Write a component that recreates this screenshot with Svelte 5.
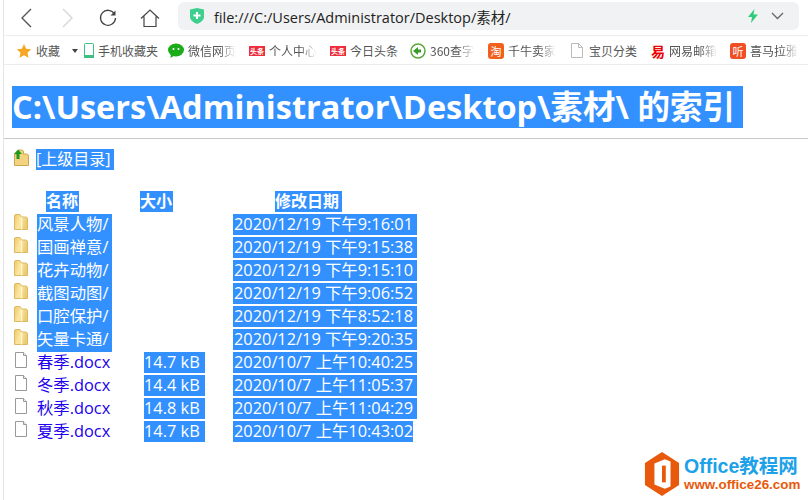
<script>
    const bookmarks = [
        { label: '手机收藏夹', icon: 'phone', w: 84 },
        { label: '微信网页', icon: 'wechat', w: 81, fade: true },
        { label: '个人中心', icon: 'toutiao', w: 81, fade: true },
        { label: '今日头条', icon: 'toutiao', w: 80 },
        { label: '360查字', icon: '360', w: 78, fade: true },
        { label: '千牛卖家', icon: 'tao', w: 83, fade: true },
        { label: '宝贝分类', icon: 'doc', w: 80 },
        { label: '网易邮箱', icon: 'netease', w: 79, fade: true },
        { label: '喜马拉雅', icon: 'ting', w: 70, fade: true }
    ];
    const rows = [
        { name: '风景人物/', size: '', date: '2020/12/19 下午9:16:01', dir: true },
        { name: '国画禅意/', size: '', date: '2020/12/19 下午9:15:38', dir: true },
        { name: '花卉动物/', size: '', date: '2020/12/19 下午9:15:10', dir: true },
        { name: '截图动图/', size: '', date: '2020/12/19 下午9:06:52', dir: true },
        { name: '口腔保护/', size: '', date: '2020/12/19 下午8:52:18', dir: true },
        { name: '矢量卡通/', size: '', date: '2020/12/19 下午9:20:35', dir: true },
        { name: '春季.docx', size: '14.7 kB', date: '2020/10/7 上午10:40:25' },
        { name: '冬季.docx', size: '14.4 kB', date: '2020/10/7 上午11:05:37' },
        { name: '秋季.docx', size: '14.8 kB', date: '2020/10/7 上午11:04:29' },
        { name: '夏季.docx', size: '14.7 kB', date: '2020/10/7 上午10:43:02' }
    ];
</script>

{#snippet folder()}
    <svg class="file-icon" width="14" height="16" viewBox="0 0 14 16">
        <defs>
            <linearGradient id="fold" x1="0" y1="0" x2="1" y2="0.300">
                <stop offset="0" stop-color="#f0c860"/>
                <stop offset="0.500" stop-color="#fbe7a4"/>
                <stop offset="1" stop-color="#eccb72"/>
            </linearGradient>
        </defs>
        <path d="M.5 15.500V2Q.5.500 2 .5h3Q7 .5 7 2.500V3h4.500q2 0 2 2v10.500z" fill="url(#fold)" stroke="#dcb95f"/>
        <path d="M7.500 3.500v12" stroke="#fff6d0" stroke-width="1.500"/>
    </svg>
{/snippet}

<div class="chrome">
    <div class="toolbar">
        <svg class="nav" width="18" height="20" viewBox="0 0 18 20"><path d="M13 1 4 10l9 9" fill="none" stroke="#555" stroke-width="1.400"/></svg>
        <svg class="nav" width="18" height="20" viewBox="0 0 18 20"><path d="m5 1 9 9-9 9" fill="none" stroke="#d6d6d6" stroke-width="1.400"/></svg>
        <svg class="nav" width="20" height="20" viewBox="0 0 20 20"><path d="M16.500 6A7.500 7.500 0 1 0 17.500 10" fill="none" stroke="#444" stroke-width="1.300"/><path d="M17.500 2.500v5h-5z" fill="#444"/></svg>
        <svg class="nav" width="20" height="20" viewBox="0 0 20 20"><path d="M1 10.500 10 2l9 8.500M4 8.500V18.500h12V8.500" fill="none" stroke="#444" stroke-width="1.200"/></svg>
        <div class="address">
            <svg width="14" height="16" viewBox="0 0 14 16"><path d="M0 1.500 7 0l7 1.500V9q0 4-7 7-7-3-7-7z" fill="#3ecf8e"/><path d="M7 4v7M3.500 7.500h7" stroke="#fff" stroke-width="2"/></svg>
            <span class="url">file:///C:/Users/Administrator/Desktop/素材/</span>
            <svg class="bolt" width="10" height="14" viewBox="0 0 10 14"><path d="M6.500 0 0 8h4l-1 6 7-8.500H5.500z" fill="#2ecc7a"/></svg>
            <svg class="chev" width="13" height="8" viewBox="0 0 13 8"><path d="m1 1 5.500 5.500L12 1" fill="none" stroke="#666" stroke-width="1.300"/></svg>
        </div>
    </div>
    <div class="bookmarks">
        <div class="mark fav">
            <svg width="16" height="16" viewBox="0 0 16 16"><path d="m8 1 2.200 4.700 5 .6-3.700 3.500 1 5L8 12.300 3.500 14.800l1-5L.8 6.300l5-.6z" fill="#f5a623"/></svg>
            <span>收藏</span>
            <i class="caret"></i>
        </div>
        {#each bookmarks as b}
            <div class="mark" style="width:{b.w}px">
                {#if b.icon === 'phone'}
                    <svg width="10" height="15" viewBox="0 0 10 15"><rect x=".5" y=".5" width="9" height="14" rx="1" fill="#fff" stroke="#3fbf7f"/><path d="M0 12h10v3H0z" fill="#3fbf7f"/></svg>
                {:else if b.icon === 'wechat'}
                    <svg width="16" height="15" viewBox="0 0 16 15"><ellipse cx="8" cy="7" rx="8" ry="6.500" fill="#1aad19"/><path d="m3 11-.5 4 4-2.500z" fill="#1aad19"/><circle cx="5.500" cy="6" r="1" fill="#fff"/><circle cx="10.500" cy="6" r="1" fill="#fff"/></svg>
                {:else if b.icon === 'toutiao'}
                    <span class="toutiao">头条</span>
                {:else if b.icon === '360'}
                    <svg width="16" height="16" viewBox="0 0 16 16"><circle cx="8" cy="8" r="7" fill="#fff" stroke="#5aa83a" stroke-width="1.500"/><path d="M3 8l5-4v2.500h3v3H8V12z" fill="#3a9a2a"/></svg>
                {:else if b.icon === 'tao'}
                    <span class="tao">淘</span>
                {:else if b.icon === 'doc'}
                    <svg class="doc" width="12" height="15" viewBox="0 0 12 15"><path d="M.5.500h7l4 4v10H.5z" fill="#fff" stroke="#bbb"/><path d="M7.500.500v4h4" fill="none" stroke="#bbb"/></svg>
                {:else if b.icon === 'netease'}
                    <span class="netease">易</span>
                {:else}
                    <span class="ting">听</span>
                {/if}
                <span class="mark-label" class:fade={b.fade}>{b.label}</span>
            </div>
        {/each}
    </div>
</div>

<main class="page">
    <h1><span class="sel">C:\Users\Administrator\Desktop\素材\ 的索引&nbsp;</span></h1>
    <hr />
    <div class="parent">
        <svg width="16" height="18" viewBox="0 0 16 18">
            <path d="M1.500 16.500V5h4V1h3q2 0 2 2v2h3q2 0 2 2v9.500z" fill="#f3d37f" stroke="#c9a84f"/>
            <path d="M5 .5 9 5H6.500v5h-3V5H1z" fill="#1e9a1e"/>
        </svg>
        <span class="sel">[上级目录]</span>
    </div>
    <table>
        <thead>
            <tr>
                <th class="name-head"><span class="sel">名称</span></th>
                <th class="size-head"><span class="sel">大小</span></th>
                <th class="date-head"><span class="sel">修改日期</span></th>
            </tr>
        </thead>
        <tbody>
            {#each rows as row}
                <tr>
                    <td class="name">
                        {#if row.dir}
                            {@render folder()}
                            <span class="sel">{row.name}</span>
                        {:else}
                            <svg class="file-icon" width="14" height="16" viewBox="0 0 14 16"><path d="M1.500.500h8l3 3v12h-11z" fill="#fff" stroke="#999"/><path d="M9.500.500v3h3" fill="#eee" stroke="#999"/></svg>
                            <span class="link">{row.name}</span>
                        {/if}
                    </td>
                    <td class="size">{#if row.size}<span class="sel">{row.size}</span>{/if}</td>
                    <td class="date"><span class="sel">{row.date}</span></td>
                </tr>
            {/each}
        </tbody>
    </table>
</main>

<div class="logo">
    <svg width="36" height="46" viewBox="0 0 38 44" preserveAspectRatio="none">
        <path d="M19 1 37 11.500v21L19 43 1 32.500v-21z" fill="#e8590c"/>
        <path d="M22 8 11 12v20l11 4 6-2V10z" fill="#fff"/>
        <path d="M19 14h4v16h-4z" fill="#e8590c"/>
    </svg>
    <div class="logo-text">
        <div class="logo-top">Office教程网</div>
        <div class="logo-url">www.office26.com</div>
    </div>
</div>

<style>
    :global(body) {
        margin: 0;
        background: #fff;
        overflow: hidden;
    }

    .chrome {
        font-family: "Noto Sans CJK SC", "Open Sans", sans-serif;
        border-bottom: 1px solid #ececec;
        height: 64px;
        margin-left: 3px;
        border-left: 1px solid #e6e6e6;
    }

    .toolbar {
        display: flex;
        align-items: center;
        height: 35px;
        border-bottom: 1px solid #ededed;
        padding-left: 14px;
    }

    .nav {
        margin-right: 22px;
        flex: none;
    }

    .address {
        display: flex;
        align-items: center;
        width: 621px;
        height: 28px;
        margin: 0 0 3px -4px;
        padding-left: 12px;
        box-sizing: border-box;
        background: #f1f2f3;
        border-radius: 6px;
    }

    .url {
        flex: 1;
        margin-left: 10px;
        font-family: "Open Sans", "Noto Sans CJK SC", sans-serif;
        font-size: 14.500px;
        color: #222;
        white-space: nowrap;
    }

    .bolt {
        margin-right: 13px;
    }

    .chev {
        margin-right: 15px;
    }

    .bookmarks {
        display: flex;
        align-items: center;
        height: 29px;
        padding-left: 12px;
        font-size: 12px;
        color: #555;
        white-space: nowrap;
    }

    .mark {
        display: flex;
        align-items: center;
        gap: 4px;
        flex: none;
    }

    .fav {
        margin-right: 6px;
    }

    .caret {
        margin-left: 8px;
        border: 3px solid transparent;
        border-top: 4px solid #444;
        border-bottom: 0;
    }

    .doc {
        margin-right: 2px;
    }

    .mark-label.fade {
        -webkit-mask-image: linear-gradient(to right, #000 65%, transparent);
        mask-image: linear-gradient(to right, #000 65%, transparent);
    }

    .toutiao {
        flex: none;
        width: 16px;
        height: 10px;
        background: #ee2d3c;
        color: #fff;
        font-size: 7px;
        font-weight: 700;
        line-height: 10px;
        text-align: center;
    }

    .tao,
    .ting {
        flex: none;
        width: 16px;
        height: 16px;
        border-radius: 3px;
        background: #f2601c;
        color: #fff;
        font-size: 11px;
        line-height: 16px;
        text-align: center;
    }

    .ting {
        background: #f04e23;
    }

    .netease {
        flex: none;
        width: 14px;
        color: #e00;
        font-size: 14px;
        font-weight: 700;
        line-height: 16px;
    }

    .page {
        margin-left: 3px;
        height: 435px;
        padding: 21px 0 0 8px;
        box-sizing: border-box;
        border-left: 1px solid #e6e6e6;
        font-family: "Open Sans", "Noto Sans CJK SC", sans-serif;
        font-size: 16px;
        color: #2200ee;
    }

    h1 {
        margin: 0;
        font-size: 32.500px;
        line-height: 44px;
        font-weight: 700;
        white-space: nowrap;
    }

    .sel {
        display: inline-block;
        vertical-align: top;
        background: #3390ff;
        color: #fff;
        line-height: 21px;
        white-space: pre;
    }

    h1 .sel {
        line-height: 42px;
    }

    hr {
        height: 0;
        margin: 8px 0 0 -8px;
        border: 0;
        border-top: 1px solid #c8c8c8;
    }

    .parent {
        display: flex;
        align-items: flex-start;
        gap: 7px;
        margin-top: 10px;
        height: 21px;
        padding-left: 1px;
    }

    .parent .sel {
        padding-right: 4px;
    }

    table {
        margin-top: 21px;
        border-collapse: collapse;
    }

    th,
    td {
        height: 23px;
        padding: 0;
        font-size: 16.350px;
        line-height: 21px;
        text-align: left;
        vertical-align: top;
        white-space: nowrap;
    }

    th {
        font-size: 16px;
        font-weight: 700;
    }

    th .sel {
        padding-right: 1px;
    }

    .name-head {
        width: 128px;
        padding-left: 34px;
        box-sizing: border-box;
    }

    .size-head {
        width: 93px;
        box-sizing: border-box;
    }

    .date-head {
        padding-left: 42px;
    }

    .date-head .sel {
        padding-right: 3px;
    }

    .name {
        display: flex;
        gap: 9px;
        padding-left: 2px;
    }

    .name .sel {
        padding-right: 4px;
    }

    .file-icon {
        flex: none;
    }

    .link {
        line-height: 21px;
    }

    .size {
        padding-left: 4px;
    }

    .size .sel {
        padding-right: 5px;
    }

    .date .sel {
        padding-left: 1px;
        padding-right: 4px;
    }

    tr:last-child .date .sel {
        padding-right: 0;
    }

    .logo {
        position: absolute;
        right: 0;
        bottom: 0;
        display: flex;
        align-items: center;
        gap: 4px;
        width: 164px;
        height: 52px;
        background: #fff;
    }

    .logo-text {
        margin-bottom: 2px;
        font-family: "Liberation Sans", "Noto Sans CJK SC", sans-serif;
        font-weight: 700;
        white-space: nowrap;
    }

    .logo-top {
        color: #1da1e8;
        font-size: 19.500px;
        line-height: 22px;
    }

    .logo-url {
        color: #e8590c;
        font-size: 13.400px;
        line-height: 15px;
    }
</style>
